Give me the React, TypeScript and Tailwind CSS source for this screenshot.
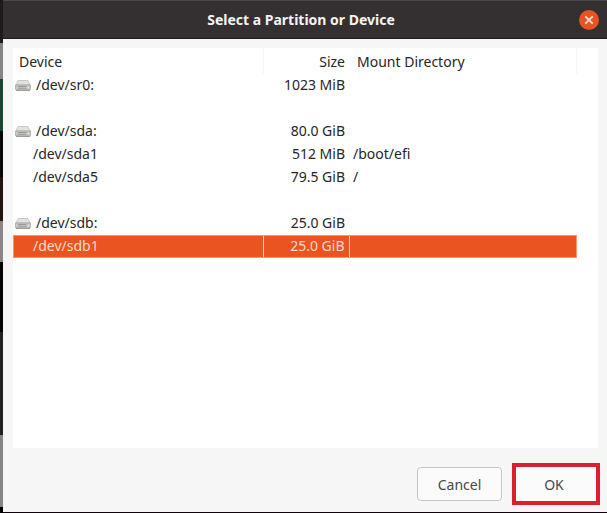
import { useState } from "react";

type Partition = {
  device: string;
  size?: string;
  mount?: string;
  isDisk?: boolean;
};

const partitions: Partition[] = [
  { device: "/dev/sr0:", size: "1023 MiB", isDisk: true },
  { device: "" },
  { device: "/dev/sda:", size: "80.0 GiB", isDisk: true },
  { device: "/dev/sda1", size: "512 MiB", mount: "/boot/efi" },
  { device: "/dev/sda5", size: "79.5 GiB", mount: "/" },
  { device: "" },
  { device: "/dev/sdb:", size: "25.0 GiB", isDisk: true },
  { device: "/dev/sdb1", size: "25.0 GiB" },
];

const DriveIcon = () => (
  <svg width="16" height="12" viewBox="0 0 16 12" aria-hidden="true" className="shrink-0">
    <path d="M3.2 1.5h9.6L15.2 6H.8z" fill="#e2e2e0" stroke="#bcbcba" strokeWidth=".8" />
    <path d="M.6 6h14.8v4.2q0 .9-.9.9h-13q-.9 0-.9-.9z" fill="#c9c9c7" stroke="#a2a2a0" strokeWidth=".8" />
    <path d="M3 7.5h8.5M3 9.3h8.5" stroke="#949492" strokeWidth=".9" />
    <path d="M12.8 8.4h1.2" stroke="#f2f2f0" strokeWidth="1" />
    <path d="M1 11.4h14" stroke="#868684" strokeWidth=".8" />
  </svg>
);

// Sliver of the desktop left of the dialog
const Backdrop = () => (
  <div className="flex w-[3px] shrink-0 flex-col bg-black">
    <div className="h-[43px] bg-[#1c1a1b]" />
    <div className="h-9 bg-[#858384]" />
    <div className="h-[52px] bg-[#174632]" />
    <div className="h-[46px] bg-[#080706]" />
    <div className="h-11 bg-[#21140e]" />
    <div className="h-[41px] bg-[#8b8587]" />
    <div className="h-[70px] bg-[#050305]" />
    <div className="h-[103px] bg-[#222021]" />
    <div className="h-[72px] bg-[#858585]" />
  </div>
);

export default function App() {
  const [selected, setSelected] = useState("/dev/sdb1");

  return (
    <div className="flex min-h-screen bg-[#f6f6f6] font-['Noto_Sans','Open_Sans',sans-serif] text-sm text-[#262626]">
      <Backdrop />

      <div className="flex flex-1 flex-col border-b border-[#12000d]">
        {/* Title bar */}
        <header className="flex h-[39px] items-center border-y border-[#4b4648] border-b-[#1d1a1b] bg-[#343031] pr-2">
          <h1 className="flex-1 pl-5 text-center text-sm font-bold text-[#f4f3f3]">
            Select a Partition or Device
          </h1>
          <button
            type="button"
            aria-label="Close"
            className="flex size-5 items-center justify-center rounded-full bg-[#e65425] text-[#fbe3da]"
          >
            <svg width="10" height="10" viewBox="0 0 10 10" aria-hidden="true">
              <path d="M1.3 1.3l7.4 7.4M8.7 1.3L1.3 8.7" stroke="currentColor" strokeWidth="1.7" fill="none" />
            </svg>
          </button>
        </header>

        {/* Partition list */}
        <main className="mr-[9px] ml-[10px] mt-[9px] flex-1 bg-white pr-[21px]">
          <table className="w-full table-fixed border-collapse">
            <colgroup>
              <col className="w-[250px]" />
              <col className="w-[86px]" />
              <col />
            </colgroup>
            <thead>
              <tr className="h-[26px] leading-5">
                <th className="border-r border-[#f5f5f5] pt-0.5 pl-1.5 text-left font-normal">Device</th>
                <th className="pt-0.5 pr-1 text-right font-normal">Size</th>
                <th className="border-r border-[#f5f5f5] pt-0.5 pl-2 text-left font-normal">Mount Directory</th>
              </tr>
            </thead>
            <tbody>
              {partitions.map((item, index) => {
                const active = item.device !== "" && item.device === selected;
                return (
                  <tr
                    key={index}
                    onClick={() => item.device && setSelected(item.device)}
                    className={
                      active
                        ? "h-[23px] bg-[#e95420] leading-5 text-[#fbd9cb] outline outline-1 -outline-offset-1 outline-[#f0986f]"
                        : "h-[23px] leading-5"
                    }
                  >
                    <td className={active ? "border-r border-[#fbd9cb] pb-0.5" : "pb-0.5"}>
                      <div className={item.isDisk ? "flex items-center gap-[5px] pl-[2px]" : "pl-5"}>
                        {item.isDisk && <DriveIcon />}
                        {item.device}
                      </div>
                    </td>
                    <td className={active ? "border-r border-[#fbd9cb] pr-1 pb-0.5 text-right" : "pr-1 pb-0.5 text-right"}>
                      {item.size}
                    </td>
                    <td className="pb-0.5 pl-1">{item.mount}</td>
                  </tr>
                );
              })}
            </tbody>
          </table>
        </main>

        {/* Actions */}
        <footer className="flex items-center justify-end gap-[10px] pt-[15px] pr-[7px] pb-[7px]">
          <button
            type="button"
            className="h-[34px] w-[85px] rounded border border-[#c6c6c6] bg-[#fbfbfb] pt-0.5 text-[#484848]"
          >
            Cancel
          </button>
          <button
            type="button"
            className="h-[42px] w-[88px] border-4 border-[#d9202c] bg-[#fbfbfb] pt-0.5 pr-1 text-[#484848]"
          >
            OK
          </button>
        </footer>
      </div>
    </div>
  );
}
